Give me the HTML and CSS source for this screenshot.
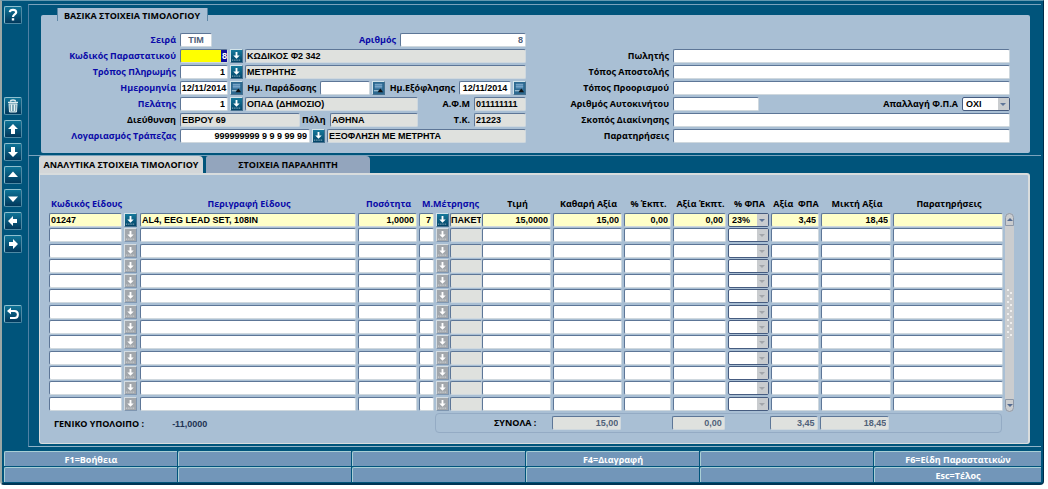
FILE: index.html
```html
<!DOCTYPE html>
<html lang="el">
<head>
<meta charset="utf-8">
<title>Τιμολόγιο</title>
<link rel="stylesheet" href="styles.css">
</head>
<body>
<svg class="sprite" aria-hidden="true">
  <symbol id="i-lov" viewBox="0 0 12 13"><path d="M5 2h2v4h2.500L6 9.500 2.500 6H5z" fill="#fff"/><path d="M1 11h10" stroke="#fff" stroke-dasharray="1 1" opacity=".8"/></symbol>
  <symbol id="i-cal" viewBox="0 0 12 13"><path d="M2 2h8v5H2z" fill="#5b8fb8"/><path d="M2 2.500h8M2 5h8" stroke="#7eaac8"/><path d="M1 9.500h5" stroke="#c8dce6"/><path d="M5 11l3-4 3 4z" fill="#111"/></symbol>
  <symbol id="i-down" viewBox="0 0 16 16"><path d="M6 3h4v5h3l-5 5-5-5h3z" fill="#fff"/></symbol>
  <symbol id="i-up" viewBox="0 0 16 16"><path d="M6 13h4V8h3L8 3 3 8h3z" fill="#fff"/></symbol>
  <symbol id="i-left" viewBox="0 0 16 16"><path d="M12 6v4H8v3L3 8l5-5v3z" fill="#fff"/></symbol>
  <symbol id="i-right" viewBox="0 0 16 16"><path d="M4 6v4h4v3l5-5-5-5v3z" fill="#fff"/></symbol>
  <symbol id="i-prev" viewBox="0 0 16 16"><path d="M8 4.500L13 10H3z" fill="#fff"/></symbol>
  <symbol id="i-next" viewBox="0 0 16 16"><path d="M8 12L3 6.500h10z" fill="#fff"/></symbol>
  <symbol id="i-help" viewBox="0 0 16 16"><path d="M4.800 5.200C5 3.400 6.300 2.800 8 2.800c2 0 3.200.9 3.200 2.500C11.200 7.500 8 7.500 8 10" fill="none" stroke="#fff" stroke-width="2.200"/><path d="M6.800 11.200h2.400v2.300H6.800z" fill="#fff"/></symbol>
  <symbol id="i-trash" viewBox="0 0 16 16"><path d="M5.500 3.500c0-2 5-2 5 0M3 4.500h10" fill="none" stroke="#dcebee" stroke-width="1.400"/><path d="M4 6h8l-.5 8h-7z" fill="#7fa9b8" stroke="#dcebee"/><path d="M6.500 6.500V13M9.500 6.500V13" stroke="#e8f4f4"/></symbol>
  <symbol id="i-back" viewBox="0 0 16 16"><path d="M4 5h5.500c4.500 0 4.500 7 0 7H5" fill="none" stroke="#fff" stroke-width="2"/><path d="M2 5l4-3.500v7z" fill="#fff"/></symbol>
</svg>

<div class="window">
  <nav class="sidebar" aria-label="Εργαλεία">
    <button class="tool" aria-label="Βοήθεια"><svg><use href="#i-help"/></svg></button>
    <div class="toolgroup">
      <button class="tool" aria-label="Διαγραφή"><svg><use href="#i-trash"/></svg></button>
      <button class="tool" aria-label="Πρώτη"><svg><use href="#i-up"/></svg></button>
      <button class="tool" aria-label="Τελευταία"><svg><use href="#i-down"/></svg></button>
      <button class="tool" aria-label="Προηγούμενη"><svg><use href="#i-prev"/></svg></button>
      <button class="tool" aria-label="Επόμενη"><svg><use href="#i-next"/></svg></button>
      <button class="tool" aria-label="Αριστερά"><svg><use href="#i-left"/></svg></button>
      <button class="tool" aria-label="Δεξιά"><svg><use href="#i-right"/></svg></button>
    </div>
    <button class="tool" aria-label="Επιστροφή"><svg><use href="#i-back"/></svg></button>
  </nav>

  <main class="main">
    <section class="frame basic">
      <h2 class="title">ΒΑΣΙΚΑ ΣΤΟΙΧΕΙΑ ΤΙΜΟΛΟΓΙΟΥ</h2>
      <div class="card">
        <div class="form">
          <div class="row">
            <label class="lead req" for="series">Σειρά</label>
            <input class="w-32 center muted" id="series" value="ΤΙΜ">
            <label class="push req" for="number">Αριθμός</label>
            <input class="w-126 num muted" id="number" value="8">
          </div>
          <div class="row">
            <label class="lead req" for="doc">Κωδικός Παραστατικού</label>
            <span class="current w-48"><input class="num" id="doc" value="8"></span>
            <button class="lov" aria-label="Λίστα παραστατικών"><svg><use href="#i-lov"/></svg></button>
            <input class="grow" readonly aria-label="Περιγραφή παραστατικού" value="ΚΩΔΙΚΟΣ Φ2 342">
          </div>
          <div class="row">
            <label class="lead req" for="pay">Τρόπος Πληρωμής</label>
            <input class="w-48 num" id="pay" value="1">
            <button class="lov" aria-label="Λίστα τρόπων πληρωμής"><svg><use href="#i-lov"/></svg></button>
            <input class="grow" readonly aria-label="Περιγραφή πληρωμής" value="ΜΕΤΡΗΤΗΣ">
          </div>
          <div class="row">
            <label class="lead req" for="date">Ημερομηνία</label>
            <input class="w-48 date" id="date" value="12/11/2014">
            <button class="lov cal" aria-label="Ημερολόγιο"><svg><use href="#i-cal"/></svg></button>
            <label class="push" for="delivery">Ημ. Παράδοσης</label>
            <input class="w-50" id="delivery">
            <button class="lov cal" aria-label="Ημερολόγιο παράδοσης"><svg><use href="#i-cal"/></svg></button>
            <label class="push" for="due">Ημ.Εξόφλησης</label>
            <input class="w-52 date" id="due" value="12/11/2014">
            <button class="lov cal" aria-label="Ημερολόγιο εξόφλησης"><svg><use href="#i-cal"/></svg></button>
          </div>
          <div class="row">
            <label class="lead req" for="client">Πελάτης</label>
            <input class="w-48 num" id="client" value="1">
            <button class="lov" aria-label="Λίστα πελατών"><svg><use href="#i-lov"/></svg></button>
            <input class="grow" readonly aria-label="Επωνυμία" value="ΟΠΑΔ (ΔΗΜΟΣΙΟ)">
            <label class="tax" for="afm">Α.Φ.Μ</label>
            <input class="w-52" id="afm" readonly value="011111111">
          </div>
          <div class="row">
            <label class="lead" for="address">Διεύθυνση</label>
            <input class="w-120" id="address" readonly value="ΕΒΡΟΥ 69">
            <label for="city">Πόλη</label>
            <input class="grow" id="city" readonly value="ΑΘΗΝΑ">
            <label class="tax" for="zip">Τ.Κ.</label>
            <input class="w-52" id="zip" readonly value="21223">
          </div>
          <div class="row">
            <label class="lead req" for="bank">Λογαριασμός Τράπεζας</label>
            <input class="w-130 num" id="bank" value="999999999 9 9 9 99 99">
            <button class="lov" aria-label="Λίστα λογαριασμών"><svg><use href="#i-lov"/></svg></button>
            <input class="grow" readonly aria-label="Περιγραφή λογαριασμού" value="ΕΞΟΦΛΗΣΗ ΜΕ ΜΕΤΡΗΤΑ">
          </div>
        </div>
        <div class="form second">
          <div class="row"><label class="lead" for="seller">Πωλητής</label><input class="grow" id="seller"></div>
          <div class="row"><label class="lead" for="ship">Τόπος Αποστολής</label><input class="grow" id="ship"></div>
          <div class="row"><label class="lead" for="dest">Τόπος Προορισμού</label><input class="grow" id="dest"></div>
          <div class="row">
            <label class="lead" for="car">Αριθμός Αυτοκινήτου</label><input class="w-86" id="car">
            <label class="push" for="exempt">Απαλλαγή Φ.Π.Α</label>
            <span class="drop w-48"><select id="exempt"><option>ΟΧΙ</option></select></span>
          </div>
          <div class="row"><label class="lead" for="purpose">Σκοπός Διακίνησης</label><input class="grow" id="purpose"></div>
          <div class="row"><label class="lead" for="notes">Παρατηρήσεις</label><input class="grow" id="notes"></div>
        </div>
      </div>
    </section>

    <section class="frame detail">
      <div class="tabs" role="tablist">
        <button class="tab active" role="tab" aria-selected="true">ΑΝΑΛΥΤΙΚΑ ΣΤΟΙΧΕΙΑ ΤΙΜΟΛΟΓΙΟΥ</button>
        <button class="tab" role="tab" aria-selected="false">ΣΤΟΙΧΕΙΑ ΠΑΡΑΛΗΠΤΗ</button>
      </div>
      <div class="panel">
        <div class="gridwrap">
          <table class="items">
            <colgroup><col class="c-code"><col class="c-lov"><col class="c-desc"><col class="c-qty"><col class="c-unit"><col class="c-lov2"><col class="c-name"><col class="c-amount"><col class="c-amount"><col class="c-pct"><col class="c-disc"><col class="c-rate"><col class="c-vat"><col class="c-gross"><col class="c-notes"></colgroup>
            <thead>
              <tr>
                <th class="req">Κωδικός Είδους</th><th></th><th class="req">Περιγραφή Είδους</th><th class="req">Ποσότητα</th>
                <th class="req" colspan="3">Μ.Μέτρησης</th><th>Τιμή</th><th>Καθαρή Αξία</th><th>% Έκπτ.</th><th>Αξία Έκπτ.</th>
                <th>% ΦΠΑ</th><th>Αξία&nbsp; ΦΠΑ</th><th>Μικτή Αξία</th><th>Παρατηρήσεις</th>
              </tr>
            </thead>
            <tbody id="lines">
              <tr class="selected">
                <td><input aria-label="Κωδικός Είδους" value="01247"></td>
                <td><button class="lov" aria-label="Λίστα ειδών"><svg><use href="#i-lov"/></svg></button></td>
                <td><input aria-label="Περιγραφή Είδους" value="AL4, EEG LEAD SET, 108IN"></td>
                <td><input class="num" aria-label="Ποσότητα" value="1,0000"></td>
                <td><input class="num" aria-label="Μονάδα" value="7"></td>
                <td><button class="lov" aria-label="Λίστα μονάδων"><svg><use href="#i-lov"/></svg></button></td>
                <td><input class="unitname" readonly aria-label="Μ.Μέτρησης" value="ΠΑΚΕΤ"></td>
                <td><input class="num" aria-label="Τιμή" value="15,0000"></td>
                <td><input class="num" aria-label="Καθαρή Αξία" value="15,00"></td>
                <td><input class="num" aria-label="% Έκπτ." value="0,00"></td>
                <td><input class="num" aria-label="Αξία Έκπτ." value="0,00"></td>
                <td><span class="drop"><select aria-label="% ΦΠΑ"><option>23%</option></select></span></td>
                <td><input class="num" aria-label="Αξία ΦΠΑ" value="3,45"></td>
                <td><input class="num" aria-label="Μικτή Αξία" value="18,45"></td>
                <td><input aria-label="Παρατηρήσεις"></td>
              </tr>
            </tbody>
          </table>
          <div class="scroller">
            <button class="scroll-up" aria-label="Πάνω"></button>
            <div class="grip"></div>
            <button class="scroll-down" aria-label="Κάτω"></button>
          </div>
        </div>
        <div class="summary">
          <div class="balance"><span>ΓΕΝΙΚΟ ΥΠΟΛΟΙΠΟ :</span><output>-11,0000</output></div>
          <div class="totals">
            <span class="caption">ΣΥΝΟΛΑ :</span>
            <input class="num" readonly aria-label="Σύνολο καθαρής αξίας" value="15,00">
            <span></span>
            <input class="num" readonly aria-label="Σύνολο έκπτωσης" value="0,00">
            <span></span>
            <input class="num" readonly aria-label="Σύνολο ΦΠΑ" value="3,45">
            <input class="num" readonly aria-label="Σύνολο μικτής αξίας" value="18,45">
          </div>
        </div>
      </div>
    </section>
  </main>

  <footer class="keys">
    <button>F1=Βοήθεια</button><button aria-label="F2"></button><button aria-label="F3"></button><button>F4=Διαγραφή</button><button aria-label="F5"></button><button>F6=Είδη Παραστατικών</button>
    <button aria-label="F7"></button><button aria-label="F8"></button><button aria-label="F9"></button><button aria-label="F10"></button><button aria-label="F11"></button><button>Esc=Τέλος</button>
  </footer>
</div>
<script src="lines.js"></script>
</body>
</html>
```
FILE: styles.css
```css
* { box-sizing: border-box; }

:root {
  --deep: #00547b;
  --panel: #a9bfd4;
  --edge: #5d7697;
  --label: "Open Sans", "Noto Sans", sans-serif;
  --value: "Liberation Sans", Arial, sans-serif;
}

body {
  margin: 0;
  background: #fff;
  font: bold 9px/14px var(--label);
  color: #000;
}

.sprite { position: absolute; width: 0; height: 0; }

button { padding: 0; margin: 0; border: 0; font: inherit; color: inherit; }

.window {
  display: grid;
  grid-template-columns: 26px minmax(0, 1fr);
  margin-right: 4px;
  padding: 3px 2px 1px 0;
  background: var(--deep);
  border-left: 2px solid #9aa7a5;
  border-right: 1px solid #002b48;
  border-top: 1px solid #6398b0;
  border-bottom: 2px solid #003655;
  border-radius: 0 0 4px 4px;
}

/* Tool buttons */
.sidebar { display: flex; flex-direction: column; gap: 52px; padding: 2px 0 0 2px; }
.toolgroup { display: flex; flex-direction: column; gap: 5px; margin-top: 21px; }
.tool {
  width: 18px;
  height: 18px;
  border: 1px solid #8fc0cf;
  border-right-color: #4f8aa5;
  border-bottom-color: #4f8aa5;
  border-radius: 2px;
  background: linear-gradient(#0e7396, #01385c);
}
.tool svg { display: block; width: 16px; height: 16px; }

/* Frames */
.frame { border-left: 1px solid #4f80a4; border-top: 1px solid #7ba3bd; }
.basic { padding: 3px 11px 2px 12px; }
.title {
  position: relative;
  width: fit-content;
  height: 13px;
  margin: 0 0 -6px 16px;
  padding: 0 7px 0 6px;
  font: bold 9px/15px var(--label);
  background: var(--panel);
  border: solid #5d86a5;
  border-width: 0 1px;
}
.card {
  display: grid;
  grid-template-columns: minmax(0, 485fr) minmax(0, 484fr);
  padding: 18px 20px 10px 0;
  background: var(--panel);
  border-radius: 2px;
}
.form { display: flex; flex-direction: column; gap: 2px; }
.form.second { padding-top: 16px; }
.row { display: flex; align-items: center; gap: 2px; height: 14px; }
.row label { white-space: nowrap; margin-right: 2px; }
.lead { flex: 0 0 135px; text-align: right; }
.second .lead { flex-basis: 143px; }
.req { color: #0a0aa8; }
.push { margin-left: auto; }
.tax { flex: 0 0 50px; text-align: right; }
.grow { flex: 1 1 0; }

input, select {
  min-width: 0;
  width: 100%;
  height: 14px;
  margin: 0;
  padding: 0 2px 0 1px;
  border: 1px solid var(--edge);
  border-right-color: #cfd8de;
  border-bottom-color: #cfd8de;
  border-radius: 2px;
  background: #fff;
  color: #000;
  font: bold 9px/12px var(--value);
  appearance: none;
}
input[readonly] { background: #dfe1de; }
.num { text-align: right; }
.center { text-align: center; padding-left: 2px; }
.date { text-align: center; padding: 0; }
.muted { color: #50617a; }

.w-32 { flex: 0 0 32px; }
.w-48 { flex: 0 0 48px; }
.w-50 { flex: 0 0 50px; }
.w-52 { flex: 0 0 52px; }
.w-86 { flex: 0 0 86px; }
.w-120 { flex: 0 0 120px; }
.w-126 { flex: 0 0 126px; }
.w-130 { flex: 0 0 130px; }

/* Focused field: the last character is marked */
.current { position: relative; height: 14px; }
.current input { display: block; background: linear-gradient(90deg, #ff0 calc(100% - 6px), #10109c 0); color: #fff; padding-right: 0; }

.lov {
  flex: 0 0 13px;
  display: block;
  width: 13px;
  height: 14px;
  border: 1px solid #d3e4ea;
  border-right-color: #47718f;
  border-bottom-color: #47718f;
  background: linear-gradient(#16799b, #024468);
}
.lov svg { display: block; width: 11px; height: 12px; }
.cal { background: #2d6990; }

.drop { position: relative; display: block; height: 14px; }
.drop select { display: block; padding-left: 3px; border-color: #465c80; }
.drop::before {
  content: "";
  position: absolute;
  top: 1px;
  right: 1px;
  bottom: 1px;
  width: 11px;
  background: #c9cccf;
}
.drop::after {
  content: "";
  position: absolute;
  top: 6px;
  right: 4px;
  border: 3px solid transparent;
  border-top-color: #5f7598;
  border-bottom: 0;
}

/* Detail tabs */
.detail { border-bottom: 1px solid #8fb3c8; padding: 0 11px 2px 10px; }
.tabs { display: flex; gap: 3px; }
.tab {
  width: 164px;
  height: 17px;
  border-radius: 2px 4px 0 0;
  background: #93a5bd;
  font: bold 9px/18px var(--label);
}
.tab.active { background: #d3d6d8; }
.panel {
  padding: 22px 14px 10px 9px;
  background: var(--panel);
  border: solid #d8dcdd;
  border-width: 2px 2px 1px 1px;
  border-radius: 0 3px 3px 3px;
}
.gridwrap { display: flex; align-items: stretch; }
.items { flex: 1; width: 0; height: 215px; table-layout: fixed; border-collapse: collapse; }
.c-code { width: 75px; } .c-lov { width: 16px; } .c-desc { width: 218px; } .c-qty { width: 61px; }
.c-unit { width: 17px; } .c-lov2 { width: 14px; } .c-name { width: 32px; } .c-amount { width: 71px; }
.c-pct { width: 49px; } .c-disc { width: 55px; } .c-rate { width: 43px; } .c-vat { width: 50px; }
.c-gross { width: 72px; } .c-notes { width: 112px; }
.items th { height: 16px; padding: 0; white-space: nowrap; vertical-align: top; }
.items td { padding: 0 2px 0 0; vertical-align: top; }
.items td:nth-child(6), .items td:nth-child(2) { padding-right: 0; }
.items td input { display: block; }
.selected input, .selected select { background: #ffffc8; }
.items td .unitname { padding: 0; background: #dfe1de; }
.items .selected td .unitname { background: #f0f0d4; }
.items td:nth-child(7) { padding-right: 0; }
.blank .lov { background: #a2a7ac; border-color: #d5dde2 #7f96b0 #7f96b0 #d5dde2; }
.blank .drop::after { border-top-color: #a2a5aa; }

.scroller { display: flex; flex-direction: column; width: 12px; margin-top: 16px; background: #cbcdcf; border-radius: 6px; }
.scroller button { flex: none; display: grid; place-items: center; height: 13px; background: #cbcdcf; border: 1px solid #8d98a8; }
.scroller .scroll-up { border-radius: 6px 6px 0 0; }
.scroller .scroll-down { border-radius: 0 0 6px 6px; }
.scroller button::after { content: ""; border: 3px solid transparent; }
.scroller .scroll-up::after { border-top-width: 0; border-bottom-color: #536a90; }
.scroller .scroll-down::after { border-bottom-width: 0; border-top-color: #536a90; }
.grip {
  flex: 0 0 50px;
  margin: auto 1px;
  background:
    radial-gradient(circle at 2px 2px, #eee 1px, transparent 1px) 0 0 / 6px 6px,
    radial-gradient(circle at 5px 5px, #eee 1px, transparent 1px) 0 0 / 6px 6px;
}

/* Totals */
.summary { display: grid; grid-template-columns: minmax(0, 387fr) minmax(0, 569fr); margin: 1px 12px 0 0; }
.balance { display: flex; gap: 28px; padding: 4px 0 0 5px; font: bold 9px/14px var(--label); }
.balance output { color: #1e3354; font-family: var(--value); }
.totals {
  display: grid;
  grid-template-columns: minmax(0, 117fr) minmax(0, 71fr) minmax(0, 49fr) minmax(0, 55fr) minmax(0, 43fr) minmax(0, 50fr) minmax(0, 72fr) minmax(0, 110fr);
  padding: 2px 0;
  border: 1px solid #94abc4;
  border-radius: 4px;
}
.totals input { width: calc(100% - 2px); color: #50617a; }
.caption { padding-right: 16px; text-align: right; font: bold 9px/14px var(--label); }

/* Function keys */
.keys {
  grid-column: 1 / -1;
  display: grid;
  grid-template-columns: repeat(5, minmax(0, 173fr)) minmax(0, 167fr);
  gap: 1px;
  margin: 4px 0 0 2px;
}
.keys button {
  height: 15px;
  background: #7296b9;
  border-top: 1px solid #a9cfd6;
  border-left: 1px solid #a9cfd6;
  border-radius: 2px 0 0 0;
  color: #fff;
  font: bold 9px/13px var(--label);
}
```
FILE: lines.js
```js
// Fills the grid with blank order lines below the first one.
const body = document.getElementById("lines");
const first = body.rows[0];
for (let i = 0; i < 12; i++) {
  const row = first.cloneNode(true);
  row.className = "blank";
  row.querySelectorAll("input").forEach((field) => field.setAttribute("value", ""));
  row.querySelector("option").textContent = "";
  body.append(row);
}
```
